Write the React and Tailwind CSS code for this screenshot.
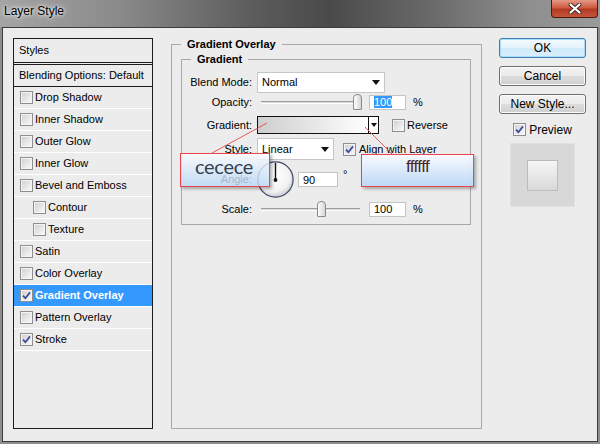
import React from "react";

const styleRows = [
  { name: "Drop Shadow" },
  { name: "Inner Shadow" },
  { name: "Outer Glow" },
  { name: "Inner Glow" },
  { name: "Bevel and Emboss" },
  { name: "Contour", sub: true },
  { name: "Texture", sub: true },
  { name: "Satin" },
  { name: "Color Overlay" },
  { name: "Gradient Overlay", on: true, active: true },
  { name: "Pattern Overlay" },
  { name: "Stroke", on: true },
];

const Check = ({ checked }) => (
  <span className="flex h-[13px] w-[13px] shrink-0 items-center justify-center border border-[#8f8f8f] bg-[#f6f6f6]">
    <span className="flex h-[11px] w-[11px] items-center justify-center border border-[#f4f4f4] bg-[linear-gradient(135deg,#d2d2d2,#f8f8f8)]">
      {checked && (
        <svg width="9" height="9" viewBox="0 0 9 9">
          <path d="M1 4.6 L3.4 7.2 L8 1.4" fill="none" stroke="#3a4a9c" strokeWidth="1.7" />
        </svg>
      )}
    </span>
  </span>
);

const Arrow = () => (
  <svg width="8" height="5" viewBox="0 0 8 5" className="shrink-0">
    <path d="M0 0 H8 L4 5 Z" fill="#111" />
  </svg>
);

const Slider = ({ thumb }) => (
  <div className="relative h-[16px] w-[108px] shrink-0">
    <div className="absolute left-[4px] top-[7px] h-[3px] w-[99px] border-t border-b border-t-[#a0a0a0] border-b-white bg-[#d8d8d8]" />
    <div
      className="absolute top-0 h-[16px] w-[9px] rounded-t-[4px] rounded-b-[1px] border border-[#8a8a8a] bg-[linear-gradient(90deg,#fefefe,#d6d6d6)]"
      style={{ left: thumb }}
    />
  </div>
);

const Field = ({ children, w = "w-[37px]" }) => (
  <div className={`ml-[4px] flex h-[15px] ${w} items-center border border-[#c4c4c4] bg-white pl-[4px] leading-[12px]`}>
    {children}
  </div>
);

const Label = ({ children }) => <div className="w-[70px] shrink-0 text-right">{children}</div>;

const Dial = () => (
  <svg width="37" height="37" viewBox="0 0 37 37" className="ml-[5px] shrink-0">
    <defs>
      <radialGradient id="dialFill" cx="0.45" cy="0.4" r="0.6">
        <stop offset="0%" stopColor="#ffffff" />
        <stop offset="75%" stopColor="#f2f2f2" />
        <stop offset="100%" stopColor="#c9ccd4" />
      </radialGradient>
    </defs>
    <circle cx="18.5" cy="18.5" r="17.6" fill="url(#dialFill)" stroke="#3d4766" strokeWidth="1.2" />
    <line x1="18.5" y1="2" x2="18.5" y2="19" stroke="#111" strokeWidth="1.4" />
    <circle cx="18.5" cy="19" r="1.9" fill="#111" />
  </svg>
);

const Button = ({ children, primary }) => (
  <div
    className={`flex h-[20px] w-[87px] items-center justify-center rounded-[3px] border text-[12px] ${
      primary
        ? "border-[#3c7fb1] bg-[linear-gradient(180deg,#f4fbfe_0%,#e3f3fc_50%,#cfeafb_51%,#d9eefb_100%)] shadow-[inset_0_0_0_1px_#a9dcf6]"
        : "border-[#707070] bg-[linear-gradient(180deg,#f2f2f2_0%,#ebebeb_50%,#dddddd_51%,#cfcfcf_100%)] shadow-[inset_0_0_0_1px_#fbfbfb]"
    }`}
  >
    {children}
  </div>
);

export default function App() {
  return (
    <div className="relative flex h-[444px] w-[600px] flex-col overflow-hidden bg-[#8e8e8e] font-['Liberation_Sans',Arial,sans-serif] text-[11px] text-black">
      {/* title bar */}
      <div className="flex h-[27px] shrink-0 items-start justify-between bg-[linear-gradient(90deg,#a4a4a4_0%,#8a8a8a_20%,#5c5c5c_42%,#4a4a4a_55%,#6a6a6a_72%,#8e8e8e_88%,#9a9a9a_100%)] pl-[4px] pr-[2px]">
        <div className="mt-[4px] text-[12px] leading-[15px] [text-shadow:0_0_6px_#fff,0_0_3px_#fff]">Layer Style</div>
        <div className="flex h-[18px] w-[47px] items-center justify-center rounded-b-[4px] border border-t-0 border-[#4d1a10] bg-[linear-gradient(180deg,#e49a86_0%,#cf5a40_45%,#b23a22_55%,#c4553a_100%)]">
          <svg width="14" height="11" viewBox="0 0 14 11">
            <path d="M2.5 1.5 L11.5 9.5 M11.5 1.5 L2.5 9.5" stroke="#3a2a2a" strokeWidth="4" strokeLinecap="round" />
            <path d="M2.5 1.5 L11.5 9.5 M11.5 1.5 L2.5 9.5" stroke="#ffffff" strokeWidth="2.2" strokeLinecap="round" />
          </svg>
        </div>
      </div>

      {/* client area */}
      <div className="mx-[2px] mb-[2px] flex flex-1 items-start border border-[#3c3c3c] bg-[#ececec] pl-[10px]">
        {/* styles list */}
        <div className="mt-[10px] h-[391px] w-[140px] shrink-0 border border-[#1c1c1c]">
          <div className="flex h-[24px] items-center border-b border-[#1c1c1c] pl-[5px]">Styles</div>
          <div className="h-[1px]" />
          <div className="flex h-[23px] items-center border-y border-[#1c1c1c] pl-[5px]">Blending Options: Default</div>
          {styleRows.map((r) => (
            <div
              key={r.name}
              className={`flex h-[22px] items-center border-b border-white ${r.sub ? "pl-[19px]" : "pl-[6px]"} ${
                r.active ? "bg-[#3399ff] font-bold text-white" : ""
              }`}
            >
              <Check checked={r.on} />
              <span className="ml-[2px]">{r.name}</span>
            </div>
          ))}
        </div>

        {/* main settings */}
        <fieldset className="ml-[18px] mt-[9px] h-[392px] w-[311px] shrink-0 border border-[#a9a9a9]">
          <legend className="ml-[9px] px-[6px] font-bold leading-[14px]">Gradient Overlay</legend>
          <fieldset className="mx-[9px] mt-[1px] h-[173px] w-[290px] border border-[#a9a9a9]">
            <legend className="ml-[9px] px-[6px] font-bold leading-[14px]">Gradient</legend>
            <div className="flex flex-col pt-[6px]">
              <div className="flex h-[21px] items-center">
                <Label>Blend Mode:</Label>
                <div className="ml-[5px] flex h-[21px] w-[128px] items-center justify-between border border-[#c6c6c6] bg-white pl-[4px] pr-[4px]">
                  <span>Normal</span>
                  <Arrow />
                </div>
              </div>
              <div className="mt-[1px] flex h-[16px] items-center">
                <Label>Opacity:</Label>
                <div className="ml-[5px] flex items-center">
                  <Slider thumb={96} />
                  <Field>
                    <span className="bg-[#3399ff] text-white">100</span>
                  </Field>
                  <span className="ml-[7px]">%</span>
                </div>
              </div>
              <div className="mt-[6px] flex h-[18px] items-center">
                <Label>Gradient:</Label>
                <div className="ml-[5px] flex h-[18px] w-[122px] border border-[#111]">
                  <div className="flex-1 bg-[linear-gradient(90deg,#cecece,#ffffff)]" />
                  <div className="flex w-[10px] items-center justify-center border-l border-[#111] bg-white">
                    <svg width="6" height="4" viewBox="0 0 6 4">
                      <path d="M0 0 H6 L3 4 Z" fill="#111" />
                    </svg>
                  </div>
                </div>
                <div className="ml-[13px] flex items-center">
                  <Check />
                  <span className="ml-[2px]">Reverse</span>
                </div>
              </div>
              <div className="mt-[4px] flex h-[22px] items-center">
                <Label>Style:</Label>
                <div className="ml-[5px] flex h-[22px] w-[77px] items-center justify-between border border-[#c6c6c6] bg-white pl-[4px] pr-[4px]">
                  <span>Linear</span>
                  <Arrow />
                </div>
                <div className="ml-[9px] flex items-center">
                  <Check checked />
                  <span className="ml-[3px]">Align with Layer</span>
                </div>
              </div>
              <div className="mt-[1px] flex h-[37px] items-center">
                <Label>Angle:</Label>
                <Dial />
                <Field w="w-[40px]">90</Field>
                <span className="ml-[5px] mb-[10px]">°</span>
              </div>
              <div className="mt-[3px] flex h-[16px] items-center">
                <Label>Scale:</Label>
                <div className="ml-[5px] flex items-center">
                  <Slider thumb={60} />
                  <Field>100</Field>
                  <span className="ml-[7px]">%</span>
                </div>
              </div>
            </div>
          </fieldset>
        </fieldset>

        {/* buttons + preview */}
        <div className="ml-[17px] mt-[10px] flex w-[87px] shrink-0 flex-col items-center gap-[8px]">
          <Button primary>OK</Button>
          <Button>Cancel</Button>
          <Button>New Style...</Button>
          <div className="mt-[1px] flex h-[13px] items-center">
            <Check checked />
            <span className="ml-[3px] text-[12px]">Preview</span>
          </div>
          <div className="-mt-[1px] flex h-[64px] w-[65px] items-center justify-center border border-[#e0e0e0] bg-[#d8d8d8]">
            <div className="h-[31px] w-[31px] border border-[#bcbcbc] bg-[linear-gradient(0deg,#d9d9d9,#f6f6f6)]" />
          </div>
        </div>
      </div>

      {/* annotation lines */}
      <svg className="pointer-events-none absolute left-0 top-0" width="600" height="444">
        <line x1="267" y1="123" x2="212" y2="153" stroke="#e35a5a" strokeWidth="1" />
        <line x1="365" y1="127" x2="393" y2="155" stroke="#e35a5a" strokeWidth="1" />
      </svg>

      {/* annotation callouts */}
      <div className="absolute left-[180px] top-[153px] flex h-[34px] w-[90px] justify-center border border-[#e8464b] bg-[linear-gradient(180deg,rgba(250,252,255,0.8),rgba(186,215,247,0.82))] pr-[2px] pt-[1px] font-['Lato',sans-serif] text-[20px] leading-[22px] tracking-[-0.3px] text-[#34404e] shadow-[2px_2px_3px_rgba(0,0,0,0.3)]">
        cecece
      </div>
      <div className="absolute left-[361px] top-[154px] flex h-[33px] w-[113px] justify-center border border-[#e8464b] bg-[linear-gradient(180deg,rgba(250,252,255,0.9),rgba(186,215,247,0.95))] pt-[2px] font-['Liberation_Sans',sans-serif] text-[17px] leading-[20px] tracking-[-0.6px] text-[#4d2a2a] shadow-[2px_2px_3px_rgba(0,0,0,0.3)]">
        ffffff
      </div>
    </div>
  );
}
